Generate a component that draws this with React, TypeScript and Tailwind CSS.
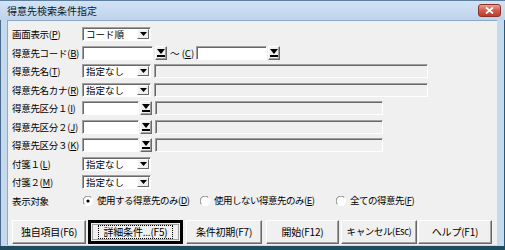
import React from "react";

const FONT = { fontFamily: '"Noto Sans CJK JP", "Noto Sans", sans-serif' };

function U({ c }: { c: string }) {
  return <span className="underline underline-offset-[1px] decoration-[1px]">{c}</span>;
}

function Label({ text, m }: { text: string; m?: string }) {
  return (
    <div className="w-[74px] shrink-0 pl-[4px] whitespace-nowrap leading-[14px] tracking-[-0.3px]">
      {text}
      {m ? (
        <>
          (<U c={m} />)
        </>
      ) : null}
    </div>
  );
}

const sunken =
  "border-t border-l border-[#a0a0a0] border-b border-r border-b-white border-r-white shadow-[inset_1px_1px_0_#696969]";

function SmallTri() {
  return (
    <svg width="7" height="4" viewBox="0 0 7 4">
      <path d="M0 0H7L3.5 4Z" fill="#000" />
    </svg>
  );
}

function Combo({ value }: { value: string }) {
  return (
    <div className={`h-[14px] w-[69px] shrink-0 bg-white flex items-stretch ${sunken}`}>
      <div className="flex-1 pl-[3px] leading-[12px] whitespace-nowrap">{value}</div>
      <div className="w-[12px] my-[1px] mr-[1px] bg-[#f0f0f0] flex items-center justify-center border-t border-l border-white border-b border-r border-b-[#696969] border-r-[#696969]">
        <SmallTri />
      </div>
    </div>
  );
}

function Input({ w }: { w: string }) {
  return <div className={`h-[14px] shrink-0 bg-white ${sunken} ${w}`} />;
}

function Disabled({ w }: { w: string }) {
  return <div className={`h-[14px] shrink-0 bg-[#f0f0f0] ${sunken} ${w}`} />;
}

function FilterBtn() {
  return (
    <div className="h-[14px] w-[12px] bg-[#f0f0f0] flex items-center justify-center border-t border-l border-white border-b border-r border-b-[#696969] border-r-[#696969] shadow-[inset_-1px_-1px_0_#a0a0a0]">
      <svg width="8" height="8" viewBox="0 0 8 8">
        <path d="M0 0H8L4 5Z" fill="#000" />
        <rect x="0" y="6" width="8" height="2" fill="#000" />
      </svg>
    </div>
  );
}

function Radio({ checked }: { checked?: boolean }) {
  return (
    <svg width="10" height="10" viewBox="0 0 10 10" className="shrink-0">
      <circle cx="5" cy="5" r="4.5" fill="#fff" />
      <path d="M1.5 8.5A4.8 4.8 0 0 1 8.5 1.5" stroke="#808080" strokeWidth="1" fill="none" />
      <path d="M8.5 1.5A4.8 4.8 0 0 1 1.5 8.5" stroke="#ffffff" strokeWidth="1" fill="none" />
      {checked ? <circle cx="5" cy="5" r="1.6" fill="#000" /> : null}
    </svg>
  );
}

function Btn({ w, children, focus }: { w: string; children: React.ReactNode; focus?: boolean }) {
  if (focus) {
    return (
      <div className={`h-[24px] ${w} border-[3px] border-black bg-[#f0f0f0] flex`}>
        <div className="flex-1 m-[1px] border border-[#a0a0a0] flex items-center justify-center">
          <div className="border border-dotted border-[#000] px-[5px] leading-[12px] whitespace-nowrap">{children}</div>
        </div>
      </div>
    );
  }
  return (
    <div
      className={`h-[24px] ${w} bg-[#f0f0f0] flex items-center justify-center whitespace-nowrap border-t border-l border-white border-b border-r border-b-[#696969] border-r-[#696969] shadow-[inset_-1px_-1px_0_#a0a0a0]`}
    >
      {children}
    </div>
  );
}

export default function App() {
  return (
    <div
      style={FONT}
      className="w-[505px] h-[250px] overflow-hidden bg-[#c6daef] text-[9.5px] text-black flex flex-col relative"
    >
      {/* title bar */}
      <div className="h-[20px] shrink-0 flex items-center justify-between pl-[7px] pr-[4px] bg-gradient-to-b from-[#d3e3f5] to-[#bdd3ec] border-t border-[#5f7fa0]">
        <div className="text-[10px] text-[#0e1a28] leading-[12px]">得意先検索条件指定</div>
        <div className="w-[23px] h-[13px] rounded-[3px] border border-[#8a3128] bg-gradient-to-b from-[#e8a093] via-[#d05c4c] to-[#c0392b] flex items-center justify-center">
          <svg width="9" height="7" viewBox="0 0 9 7">
            <path d="M1 0.5L8 6.5M8 0.5L1 6.5" stroke="#fff" strokeWidth="1.8" />
          </svg>
        </div>
      </div>
      {/* body with frames */}
      <div className="flex-1 flex border-l border-[#4c6a8a]">
        <div className="w-[6px] bg-[#c6daef]" />
        <div className="w-[490px] h-[225px] bg-[#f0f0f0] border-t border-l border-[#8fa8c4] flex flex-col pt-[6px]">
          <div className="flex flex-col gap-y-[4.5px]">
            <div className="flex items-center h-[14px]">
              <Label text="画面表示" m="P" />
              <Combo value="コード順" />
            </div>
            <div className="flex items-center h-[14px]">
              <Label text="得意先コード" m="B" />
              <Input w="w-[71px]" />
              <div className="ml-[2px]">
                <FilterBtn />
              </div>
              <div className="ml-[3px] w-[26px] whitespace-nowrap leading-[12px]">
                ～ (<U c="C" />)
              </div>
              <Input w="w-[71px]" />
              <div className="ml-[1px]">
                <FilterBtn />
              </div>
            </div>
            <div className="flex items-center h-[14px]">
              <Label text="得意先名" m="T" />
              <Combo value="指定なし" />
              <div className="ml-[3px]">
                <Disabled w="w-[274px]" />
              </div>
            </div>
            <div className="flex items-center h-[14px]">
              <Label text="得意先名カナ" m="R" />
              <Combo value="指定なし" />
              <div className="ml-[3px]">
                <Disabled w="w-[274px]" />
              </div>
            </div>
            {[
              ["得意先区分１", "I"],
              ["得意先区分２", "J"],
              ["得意先区分３", "K"],
            ].map(([t, m]) => (
              <div key={m} className="flex items-center h-[14px]">
                <Label text={t} m={m} />
                <Input w="w-[57px]" />
                <div className="ml-[1px]">
                  <FilterBtn />
                </div>
                <div className="ml-[3px]">
                  <Disabled w="w-[228px]" />
                </div>
              </div>
            ))}
            <div className="flex items-center h-[14px]">
              <Label text="付箋１" m="L" />
              <Combo value="指定なし" />
            </div>
            <div className="flex items-center h-[14px]">
              <Label text="付箋２" m="M" />
              <Combo value="指定なし" />
            </div>
            <div className="flex items-center h-[14px] tracking-[-0.5px]">
              <Label text="表示対象" />
              <div className="flex items-center gap-[4px] w-[118px] pl-[1px]">
                <Radio checked />
                <span className="whitespace-nowrap">
                  使用する得意先のみ(<U c="D" />)
                </span>
              </div>
              <div className="flex items-center gap-[4px] w-[136px]">
                <Radio />
                <span className="whitespace-nowrap">
                  使用しない得意先のみ(<U c="E" />)
                </span>
              </div>
              <div className="flex items-center gap-[4px]">
                <Radio />
                <span className="whitespace-nowrap">
                  全ての得意先(<U c="F" />)
                </span>
              </div>
            </div>
          </div>
          <div className="flex mt-[12px] pl-[4px] text-[10px] tracking-[-0.2px]">
            <Btn w="w-[74px]">独自項目(F6)</Btn>
            <div className="ml-[2px]">
              <Btn w="w-[95px]" focus>
                詳細条件...(F5)
              </Btn>
            </div>
            <div className="ml-[3px]">
              <Btn w="w-[76px]">条件初期(F7)</Btn>
            </div>
            <div className="ml-[4px]">
              <Btn w="w-[73px]">開始(F12)</Btn>
            </div>
            <div className="ml-[2px]">
              <Btn w="w-[76px]">
                <span className="text-[9.5px] tracking-[-0.4px]">キャンセル(Esc)</span>
              </Btn>
            </div>
            <div className="ml-[1px]">
              <Btn w="w-[74px]">ヘルプ(F1)</Btn>
            </div>
          </div>
        </div>
        <div className="flex-1 bg-[#c6daef] border-r border-[#2e5670]" />
      </div>
      <div className="h-[4px] shrink-0 bg-[#1f4b60]" />
    </div>
  );
}
